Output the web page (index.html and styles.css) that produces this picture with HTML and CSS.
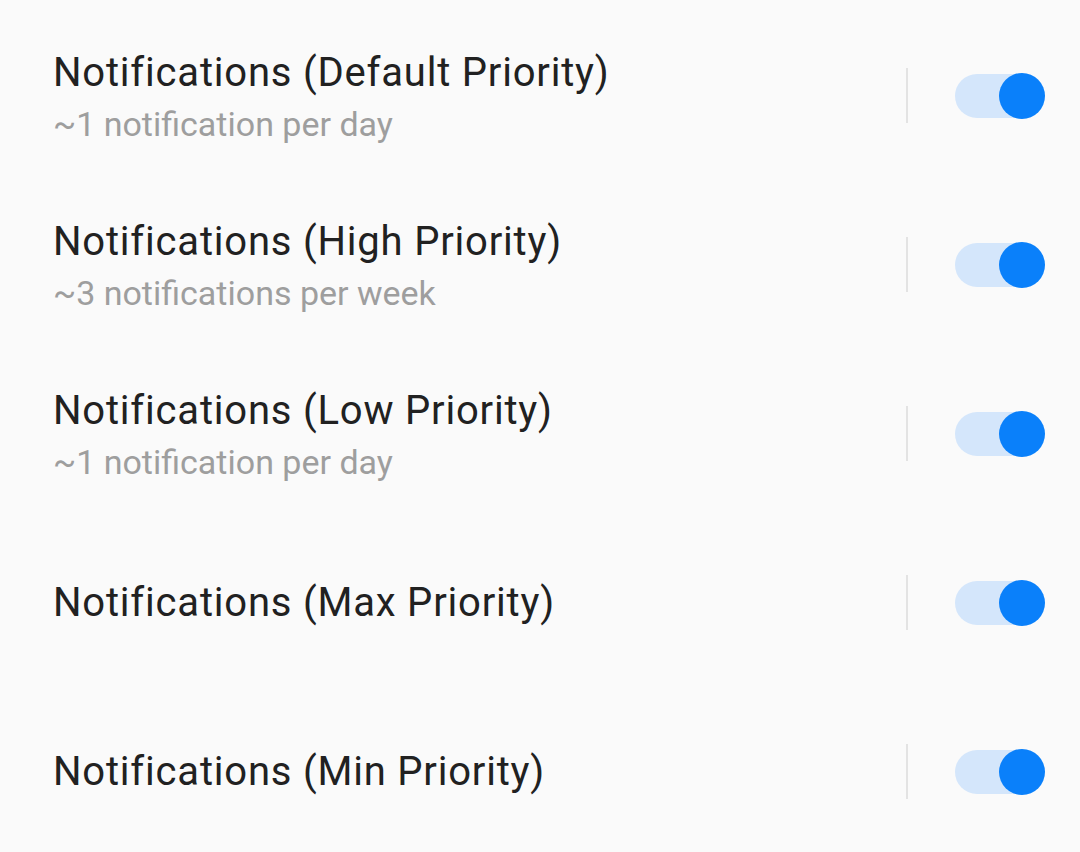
FILE: index.html
```html
<!DOCTYPE html>
<html>
<head>
<meta charset="utf-8">
<link rel="stylesheet" href="styles.css">
</head>
<body>
<div class="list">
  <div class="row">
    <div class="text">
      <div class="title">Notifications (Default Priority)</div>
      <div class="summary">~1 notification per day</div>
    </div>
    <div class="divider"></div>
    <div class="switch"><div class="track"></div><div class="thumb"></div></div>
  </div>
  <div class="row">
    <div class="text">
      <div class="title">Notifications (High Priority)</div>
      <div class="summary">~3 notifications per week</div>
    </div>
    <div class="divider"></div>
    <div class="switch"><div class="track"></div><div class="thumb"></div></div>
  </div>
  <div class="row">
    <div class="text">
      <div class="title">Notifications (Low Priority)</div>
      <div class="summary">~1 notification per day</div>
    </div>
    <div class="divider"></div>
    <div class="switch"><div class="track"></div><div class="thumb"></div></div>
  </div>
  <div class="row">
    <div class="text">
      <div class="title">Notifications (Max Priority)</div>
    </div>
    <div class="divider"></div>
    <div class="switch"><div class="track"></div><div class="thumb"></div></div>
  </div>
  <div class="row">
    <div class="text">
      <div class="title">Notifications (Min Priority)</div>
    </div>
    <div class="divider"></div>
    <div class="switch"><div class="track"></div><div class="thumb"></div></div>
  </div>
</div>
</body>
</html>
```

FILE: styles.css
```css
html, body {
  margin: 0;
  padding: 0;
  background: #fafafa;
  font-family: Roboto, "Noto Sans", sans-serif;
  overflow: hidden;
}
.list {
  padding-top: 11px;
  display: flex;
  flex-direction: column;
}
.row {
  height: 169px;
  display: flex;
  align-items: center;
  padding: 0 35px 0 53px;
}
.text {
  flex: 1;
  display: flex;
  flex-direction: column;
}
.title {
  font-size: 40px;
  line-height: 52px;
  letter-spacing: 0.8px;
  color: #212121;
}
.summary {
  font-size: 34px;
  line-height: 40px;
  margin-top: 5px;
  color: #9e9e9e;
}
.divider {
  width: 2px;
  height: 55px;
  background: #e3e3e3;
  margin-right: 47px;
}
.switch {
  position: relative;
  width: 90px;
  height: 46px;
}
.track {
  position: absolute;
  left: 0;
  top: 1px;
  width: 84px;
  height: 44px;
  border-radius: 22px;
  background: #d4e6fb;
}
.thumb {
  position: absolute;
  right: 0;
  top: 0;
  width: 46px;
  height: 46px;
  border-radius: 50%;
  background: #0a80fa;
}
```
